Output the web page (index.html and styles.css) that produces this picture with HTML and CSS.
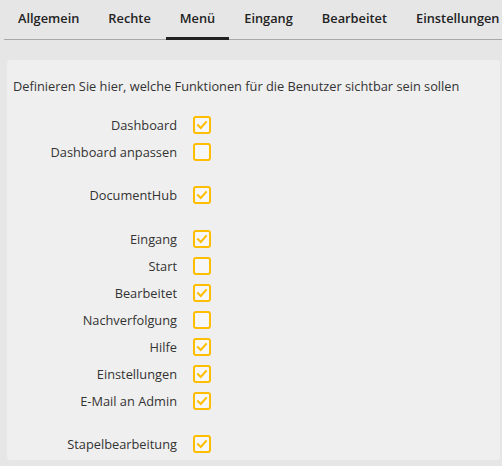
FILE: index.html
```html
<!DOCTYPE html>
<html lang="de">
<head>
<meta charset="utf-8">
<link rel="stylesheet" href="styles.css">
</head>
<body>
<div class="page">
  <nav class="tabs">
    <div class="tab">Allgemein</div>
    <div class="tab">Rechte</div>
    <div class="tab active">Menü</div>
    <div class="tab">Eingang</div>
    <div class="tab">Bearbeitet</div>
    <div class="tab">Einstellungen</div>
  </nav>
  <section class="card">
    <p class="intro">Definieren Sie hier, welche Funktionen für die Benutzer sichtbar sein sollen</p>
    <div class="group">
      <div class="row"><span class="label">Dashboard</span><span class="box checked"><svg viewBox="0 0 14 14"><path d="M3 7.2 L5.8 10 L11 4.2"/></svg></span></div>
      <div class="row"><span class="label">Dashboard anpassen</span><span class="box"></span></div>
    </div>
    <div class="group">
      <div class="row"><span class="label">DocumentHub</span><span class="box checked"><svg viewBox="0 0 14 14"><path d="M3 7.2 L5.8 10 L11 4.2"/></svg></span></div>
    </div>
    <div class="group mid">
      <div class="row"><span class="label">Eingang</span><span class="box checked"><svg viewBox="0 0 14 14"><path d="M3 7.2 L5.8 10 L11 4.2"/></svg></span></div>
      <div class="row"><span class="label">Start</span><span class="box"></span></div>
      <div class="row"><span class="label">Bearbeitet</span><span class="box checked"><svg viewBox="0 0 14 14"><path d="M3 7.2 L5.8 10 L11 4.2"/></svg></span></div>
      <div class="row"><span class="label">Nachverfolgung</span><span class="box"></span></div>
      <div class="row"><span class="label">Hilfe</span><span class="box checked"><svg viewBox="0 0 14 14"><path d="M3 7.2 L5.8 10 L11 4.2"/></svg></span></div>
      <div class="row"><span class="label">Einstellungen</span><span class="box checked"><svg viewBox="0 0 14 14"><path d="M3 7.2 L5.8 10 L11 4.2"/></svg></span></div>
      <div class="row"><span class="label">E-Mail an Admin</span><span class="box checked"><svg viewBox="0 0 14 14"><path d="M3 7.2 L5.8 10 L11 4.2"/></svg></span></div>
    </div>
    <div class="group">
      <div class="row"><span class="label">Stapelbearbeitung</span><span class="box checked"><svg viewBox="0 0 14 14"><path d="M3 7.2 L5.8 10 L11 4.2"/></svg></span></div>
    </div>
  </section>
</div>
</body>
</html>
```

FILE: styles.css
```css
html, body {
  margin: 0;
  padding: 0;
  background: #e6e6e6;
  font-family: "Open Sans", "Liberation Sans", sans-serif;
  color: #333;
  overflow: hidden;
}

.page {
  width: 502px;
  height: 466px;
}

.tabs {
  display: flex;
  margin-left: 4px;
  height: 39px;
  border-bottom: 1px solid #a8a8a8;
  white-space: nowrap;
}

.tab {
  padding: 0 14px 0 14px;
  margin-right: 1px;
  font-size: 12.8px;
  font-weight: 600;
  color: #222;
  line-height: 36px;
  height: 36px;
}

.tab.active {
  border-bottom: 3px solid #222;
  height: 37px;
  margin-bottom: -1px;
}

.card {
  margin: 20px 2px 0 7px;
  background: #efefef;
  border-radius: 4px;
  padding: 17px 6px 2px 6px;
  height: 381px;
}

.intro {
  margin: 0 0 16.5px 0;
  font-size: 12.8px;
  line-height: 18px;
  color: #333;
}

.group + .group {
  margin-top: 16px;
}

.group + .group.mid {
  margin-top: 17px;
}

.row {
  display: flex;
  align-items: center;
  height: 27px;
}

.label {
  width: 164px;
  text-align: right;
  font-size: 12.8px;
  color: #333;
  margin-right: 16px;
}

.box {
  box-sizing: border-box;
  width: 18px;
  height: 18px;
  border: 2px solid #ffbd00;
  border-radius: 3px;
  background: #f7f7f7;
  display: flex;
  align-items: center;
  justify-content: center;
}

.box svg {
  width: 14px;
  height: 14px;
}

.box svg path {
  fill: none;
  stroke: #ffbd00;
  stroke-width: 2;
  stroke-linecap: square;
}
```
